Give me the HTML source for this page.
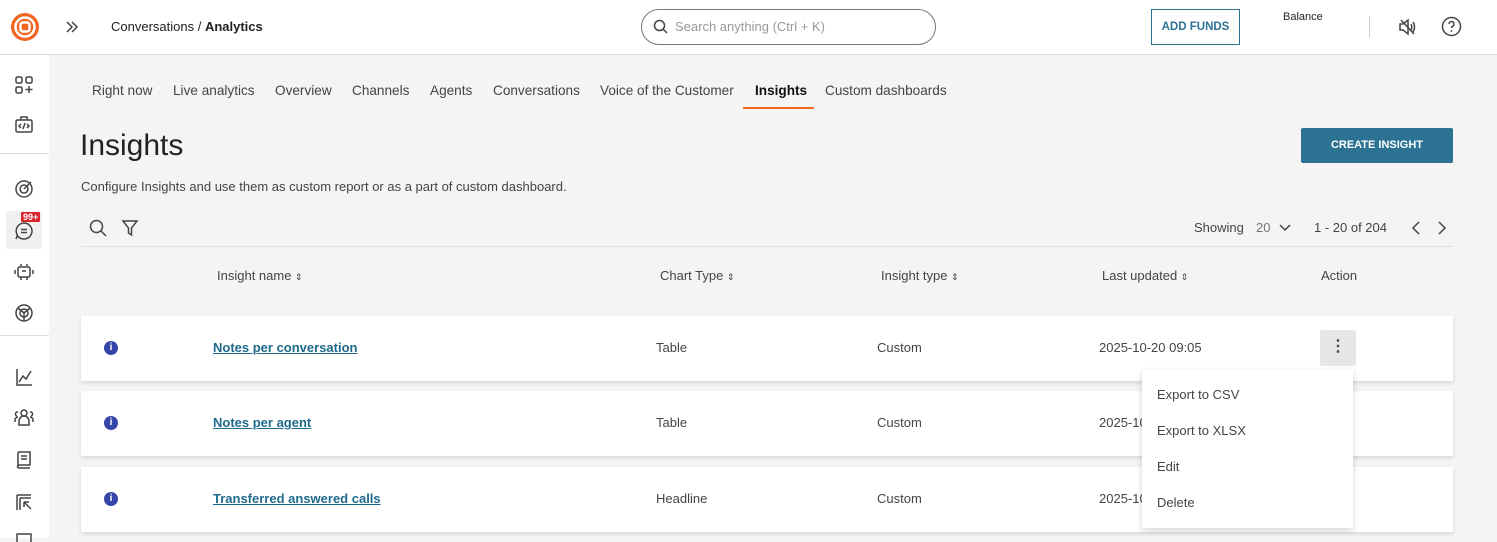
<!DOCTYPE html>
<html><head><meta charset="utf-8"><style>
*{box-sizing:border-box;margin:0;padding:0}
body{width:1497px;height:538px;overflow:hidden;background:#f4f4f2;font-family:"Liberation Sans",sans-serif;color:#333;position:relative}
.a{position:absolute;white-space:nowrap}
.hdr{position:absolute;left:0;top:0;width:1497px;height:55px;background:#fff;border-bottom:1px solid #dcdcdc}
.side{position:absolute;left:0;top:55px;width:49px;height:483px;background:#fff}
.sep{position:absolute;left:0;width:49px;height:1px;background:#dcdcdc}
.tab{font-size:13.6px;color:#444;top:83px}
.row{position:absolute;left:81px;width:1372px;height:65px;background:#fff;box-shadow:0 2px 4px rgba(0,0,0,.12)}
.row .a{top:24px;font-size:13px;color:#444}
.info{position:absolute;left:23px;top:25px;width:14px;height:14px;border-radius:50%;background:#3545a8;color:#fff;font-size:10px;font-weight:bold;text-align:center;line-height:14px}
.lnk{color:#1f6a8c!important;text-decoration:underline;font-weight:bold}
.th{top:268px;font-size:13px;color:#444}
.th span{font-size:9px}
.ic{stroke:#444;fill:none;stroke-width:1.5}
.menu{position:absolute;left:1142px;top:370px;width:211px;height:158px;background:#fff;box-shadow:0 2px 6px rgba(0,0,0,.18)}
.menu div{position:absolute;left:15px;font-size:13px;color:#444}
</style></head><body>
<div class="hdr"></div>
<svg class="a" style="left:10px;top:12px" width="30" height="30" viewBox="0 0 30 30"><circle cx="15" cy="15" r="14" fill="#f26522"/><circle cx="15" cy="15" r="9.5" fill="none" stroke="#fff" stroke-width="2.5"/><rect x="10.5" y="10.5" width="9" height="9" rx="2.5" fill="none" stroke="#fff" stroke-width="2.5"/></svg>
<svg class="a" style="left:65px;top:20px" width="14" height="14" viewBox="0 0 14 14"><path class="ic" d="M2 2l5 5-5 5M7 2l5 5-5 5" stroke-width="1.2"/></svg>
<div class="a" style="left:111px;top:19px;font-size:13px;color:#222">Conversations / <b>Analytics</b></div>
<div class="a" style="left:641px;top:9px;width:295px;height:36px;border:1px solid #777;border-radius:18px"></div>
<svg class="a" style="left:653px;top:19px" width="16" height="16" viewBox="0 0 16 16"><circle cx="6.5" cy="6.5" r="5" class="ic"/><path class="ic" d="M10 10l4 4"/></svg>
<div class="a" style="left:675px;top:19px;font-size:13px;color:#999">Search anything (Ctrl + K)</div>
<div class="a" style="left:1151px;top:9px;width:89px;height:36px;border:1px solid #2c7393;color:#2c7393;font-size:11.5px;font-weight:bold;text-align:center;line-height:34px">ADD FUNDS</div>
<div class="a" style="left:1283px;top:11px;font-size:11px;color:#222">Balance</div>
<div class="a" style="left:1369px;top:16px;width:1px;height:22px;background:#ccc"></div>
<svg class="a" style="left:1398px;top:17px" width="20" height="20" viewBox="0 0 20 20"><path class="ic" d="M2 7h3l5-4v14l-5-4H2z M3 3l13 14 M13 7c1 1.5 1 4.5 0 6 M15 5c2 3 2 7 0 10" stroke-width="1.2"/></svg>
<svg class="a" style="left:1441px;top:16px" width="21" height="21" viewBox="0 0 21 21"><circle cx="10.5" cy="10.5" r="9" class="ic" stroke-width="1.3"/><path class="ic" d="M8 8a2.5 2.5 0 1 1 3.5 2.3c-.7.4-1 .8-1 1.7" stroke-width="1.3"/><circle cx="10.5" cy="15" r=".9" fill="#444"/></svg>
<div class="side"></div>
<div class="sep" style="top:153px"></div><div class="sep" style="top:335px"></div>
<svg class="a" style="left:14px;top:75px" width="20" height="20" viewBox="0 0 20 20"><rect x="2" y="2" width="6" height="6" rx="1.5" class="ic" stroke-width="1.3"/><rect x="12" y="2" width="6" height="6" rx="1.5" class="ic" stroke-width="1.3"/><rect x="2" y="12" width="6" height="6" rx="1.5" class="ic" stroke-width="1.3"/><path class="ic" d="M15 11v7M11.5 14.5h7" stroke-width="1.3"/></svg>
<svg class="a" style="left:14px;top:115px" width="20" height="20" viewBox="0 0 20 20"><rect x="2" y="5" width="16" height="12" rx="1.5" class="ic" stroke-width="1.3"/><path class="ic" d="M7 5V2h6v3M7 9l-2 2 2 2M13 9l2 2-2 2M11 8l-2 6" stroke-width="1.1"/></svg>
<svg class="a" style="left:14px;top:179px" width="20" height="20" viewBox="0 0 20 20"><circle cx="10" cy="10" r="8" class="ic" stroke-width="1.3"/><circle cx="10" cy="10" r="4" class="ic" stroke-width="1.3"/><path class="ic" d="M10 10l7-7" stroke-width="1.3"/></svg>
<div class="a" style="left:6px;top:211px;width:36px;height:38px;background:#f0f0ee"></div>
<svg class="a" style="left:14px;top:221px" width="20" height="20" viewBox="0 0 20 20"><path class="ic" d="M10 2a8 8 0 1 1-6.5 12.7L2 18l1.3-4A8 8 0 0 1 10 2zM7 8.5h6M7 11.5h6" stroke-width="1.3"/></svg>
<div class="a" style="left:21px;top:212px;background:#d9232e;color:#fff;font-size:9px;font-weight:bold;padding:0 2px;line-height:10px;border-radius:1px">99+</div>
<svg class="a" style="left:14px;top:262px" width="20" height="20" viewBox="0 0 20 20"><rect x="4" y="5" width="12" height="10" rx="1.5" class="ic" stroke-width="1.3"/><path class="ic" d="M7 2v2M13 2v2M1 8v4M19 8v4M7 15v3M13 15v3M8 9h4" stroke-width="1.3"/></svg>
<svg class="a" style="left:14px;top:303px" width="20" height="20" viewBox="0 0 20 20"><circle cx="10" cy="10" r="8" class="ic" stroke-width="1.3"/><circle cx="10" cy="10" r="4" class="ic" stroke-width="1.3"/><path class="ic" d="M4 5l6 5M16 5l-6 5M10 18V10" stroke-width="1"/></svg>
<svg class="a" style="left:14px;top:367px" width="20" height="20" viewBox="0 0 20 20"><path class="ic" d="M3 2v16h15M5 15l4-6 3 3 5-8" stroke-width="1.3"/></svg>
<svg class="a" style="left:13px;top:407px" width="22" height="20" viewBox="0 0 22 20"><circle cx="11" cy="6" r="3" class="ic" stroke-width="1.2"/><path class="ic" d="M6 18v-4a5 5 0 0 1 10 0v4zM5 5a2 2 0 0 0-1 4M17 5a2 2 0 0 1 1 4M2 15v-2a3 3 0 0 1 3-3M20 15v-2a3 3 0 0 0-3-3" stroke-width="1.2"/></svg>
<svg class="a" style="left:14px;top:450px" width="20" height="20" viewBox="0 0 20 20"><path class="ic" d="M4 2h12v13H5a1.5 1.5 0 0 0 0 3h11M4 2v14.5M7 6h6M7 9h6" stroke-width="1.3"/></svg>
<svg class="a" style="left:14px;top:492px" width="20" height="20" viewBox="0 0 20 20"><path class="ic" d="M3 3h14M3 3v15M6 6h11M6 6v12M10 10l7 7M10 10v5M10 10h5" stroke-width="1.4"/></svg>
<svg class="a" style="left:14px;top:532px" width="20" height="10" viewBox="0 0 20 10"><rect x="3" y="2" width="14" height="10" class="ic" stroke-width="1.3"/></svg>

<div class="a tab" style="left:92px">Right now</div>
<div class="a tab" style="left:173px">Live analytics</div>
<div class="a tab" style="left:275px">Overview</div>
<div class="a tab" style="left:352px">Channels</div>
<div class="a tab" style="left:430px">Agents</div>
<div class="a tab" style="left:493px">Conversations</div>
<div class="a tab" style="left:600px">Voice of the Customer</div>
<div class="a tab" style="left:755px;color:#111;font-weight:bold">Insights</div>
<div class="a" style="left:743px;top:107px;width:71px;height:2px;background:#f26522"></div>
<div class="a tab" style="left:825px">Custom dashboards</div>

<div class="a" style="left:80px;top:129px;font-size:30px;color:#222">Insights</div>
<div class="a" style="left:81px;top:179px;font-size:13px;color:#444">Configure Insights and use them as custom report or as a part of custom dashboard.</div>
<div class="a" style="left:1301px;top:128px;width:152px;height:35px;background:#2c7393;border-radius:2px;color:#fff;font-size:11px;font-weight:bold;text-align:center;line-height:35px">CREATE INSIGHT</div>

<svg class="a" style="left:89px;top:219px" width="18" height="18" viewBox="0 0 18 18"><circle cx="7.5" cy="7.5" r="6" class="ic" stroke-width="1.3"/><path class="ic" d="M12 12l5 5" stroke-width="1.3"/></svg>
<svg class="a" style="left:121px;top:219px" width="18" height="18" viewBox="0 0 18 18"><path class="ic" d="M2 2h14l-5.5 7v7l-3-2V9z" stroke-width="1.3"/></svg>
<div class="a" style="left:1194px;top:220px;font-size:13px;color:#444">Showing</div>
<div class="a" style="left:1256px;top:220px;font-size:13px;color:#777">20</div>
<svg class="a" style="left:1279px;top:224px" width="12" height="8" viewBox="0 0 12 8"><path class="ic" d="M1 1l5 5 5-5" stroke-width="1.1"/></svg>
<div class="a" style="left:1314px;top:220px;font-size:13px;color:#444">1 - 20 of 204</div>
<svg class="a" style="left:1411px;top:220px" width="10" height="16" viewBox="0 0 10 16"><path class="ic" d="M8 2L2 8l6 6" stroke="#ccc" stroke-width="1.2"/></svg>
<svg class="a" style="left:1437px;top:220px" width="10" height="16" viewBox="0 0 10 16"><path class="ic" d="M2 2l6 6-6 6" stroke-width="1.4"/></svg>
<div class="a" style="left:81px;top:246px;width:1372px;height:1px;background:#e0e0de"></div>

<div class="a th" style="left:217px">Insight name <span>⇕</span></div>
<div class="a th" style="left:660px">Chart Type <span>⇕</span></div>
<div class="a th" style="left:881px">Insight type <span>⇕</span></div>
<div class="a th" style="left:1102px">Last updated <span>⇕</span></div>
<div class="a th" style="left:1321px">Action</div>

<div class="row" style="top:316px"><div class="info">i</div><div class="a lnk" style="left:132px">Notes per conversation</div><div class="a" style="left:575px">Table</div><div class="a" style="left:796px">Custom</div><div class="a" style="left:1018px">2025-10-20 09:05</div>
<div class="a" style="left:1239px;top:14px;width:36px;height:36px;background:#e6e6e6;border-radius:2px;text-align:center;font-size:16px;line-height:34px;font-weight:bold">⋮</div></div>
<div class="row" style="top:391px"><div class="info">i</div><div class="a lnk" style="left:132px">Notes per agent</div><div class="a" style="left:575px">Table</div><div class="a" style="left:796px">Custom</div><div class="a" style="left:1018px">2025-10-20 09:05</div></div>
<div class="row" style="top:467px"><div class="info">i</div><div class="a lnk" style="left:132px">Transferred answered calls</div><div class="a" style="left:575px">Headline</div><div class="a" style="left:796px">Custom</div><div class="a" style="left:1018px">2025-10-20 09:05</div></div>

<div class="menu"><div style="top:17px">Export to CSV</div><div style="top:53px">Export to XLSX</div><div style="top:89px">Edit</div><div style="top:125px">Delete</div></div>
</body></html>
